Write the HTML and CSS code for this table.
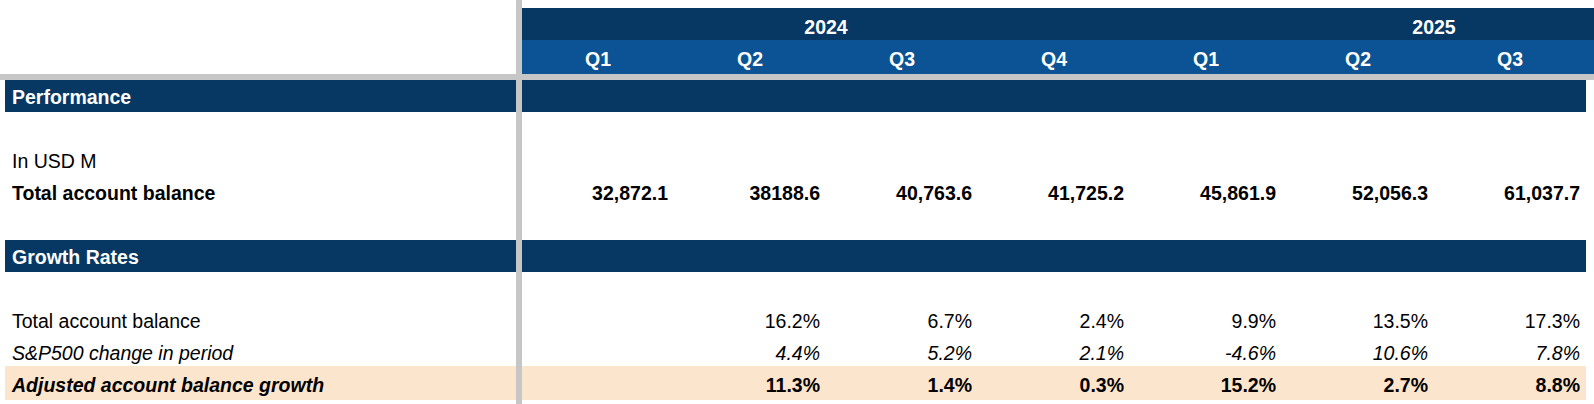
FILE: index.html
```html
<!DOCTYPE html>
<html lang="en">
<head>
<meta charset="utf-8">
<title>Account balance</title>
<link rel="stylesheet" href="styles.css">
</head>
<body>
<div class="sheet">
  <div class="lhead"></div>
  <div class="vbar"></div>
  <div class="rhead">
    <div class="years">
      <div class="year">2024</div>
      <div class="year">2025</div>
    </div>
    <div class="quarters">
      <div class="q">Q1</div><div class="q">Q2</div><div class="q">Q3</div><div class="q">Q4</div>
      <div class="q">Q1</div><div class="q">Q2</div><div class="q">Q3</div><div class="q"></div>
    </div>
  </div>
  <div class="hbar"></div>

  <div class="lbody">
    <div class="lrow band">Performance</div>
    <div class="lrow"></div>
    <div class="lrow">In USD M</div>
    <div class="lrow bold">Total account balance</div>
    <div class="lrow"></div>
    <div class="lrow band">Growth Rates</div>
    <div class="lrow"></div>
    <div class="lrow">Total account balance</div>
    <div class="lrow italic short">S&amp;P500 change in period</div>
    <div class="lrow hl bold italic tall">Adjusted account balance growth</div>
  </div>

  <div class="rbody">
    <div class="rrow band"><div></div><div></div><div></div><div></div><div></div><div></div><div></div></div>
    <div class="rrow"></div>
    <div class="rrow"></div>
    <div class="rrow bold"><div>32,872.1</div><div>38188.6</div><div>40,763.6</div><div>41,725.2</div><div>45,861.9</div><div>52,056.3</div><div>61,037.7</div></div>
    <div class="rrow"></div>
    <div class="rrow band"><div></div><div></div><div></div><div></div><div></div><div></div><div></div></div>
    <div class="rrow"></div>
    <div class="rrow"><div></div><div>16.2%</div><div>6.7%</div><div>2.4%</div><div>9.9%</div><div>13.5%</div><div>17.3%</div></div>
    <div class="rrow italic short"><div></div><div>4.4%</div><div>5.2%</div><div>2.1%</div><div>-4.6%</div><div>10.6%</div><div>7.8%</div></div>
    <div class="rrow hl bold tall"><div></div><div>11.3%</div><div>1.4%</div><div>0.3%</div><div>15.2%</div><div>2.7%</div><div>8.8%</div></div>
  </div>
</div>
</body>
</html>
```

FILE: styles.css
```css
* { box-sizing: border-box; }

html, body {
  margin: 0;
  padding: 0;
  background: #ffffff;
}

body {
  width: 1594px;
  height: 404px;
  overflow: hidden;
  font-family: "Liberation Sans", Arial, sans-serif;
  font-size: 19.5px;
  color: #000000;
}

.sheet {
  display: grid;
  grid-template-columns: 516px 6px 1072px;
  grid-template-rows: 74px 6px 324px;
  width: 1594px;
  height: 404px;
}

.lhead { grid-row: 1; grid-column: 1; background: #ffffff; }

.vbar {
  grid-row: 1 / 4;
  grid-column: 2;
  background: #c6c6c6;
}

.hbar {
  grid-row: 2;
  grid-column: 1 / 4;
  background: #c6c6c6;
}

.rhead {
  grid-row: 1;
  grid-column: 3;
  padding-top: 8px;
  overflow: hidden;
  color: #ffffff;
  font-weight: bold;
}

.years {
  display: flex;
  height: 32px;
  background: #073763;
}

.year {
  flex: 0 0 608px;
  display: flex;
  align-items: flex-end;
  justify-content: center;
  padding-bottom: 1px;
}

.quarters {
  display: flex;
  height: 34px;
  background: #0b5394;
}

.q {
  flex: 0 0 152px;
  display: flex;
  align-items: flex-end;
  justify-content: center;
  padding-bottom: 3px;
}

.lbody { grid-row: 3; grid-column: 1; }
.rbody { grid-row: 3; grid-column: 3; overflow: hidden; }

.lrow {
  height: 32px;
  margin-left: 5px;
  padding-left: 7px;
  padding-bottom: 3px;
  display: flex;
  align-items: flex-end;
  white-space: nowrap;
}

.rrow {
  height: 32px;
  width: 1064px;
  display: grid;
  grid-template-columns: repeat(7, 152px);
}

.rrow > div {
  display: flex;
  align-items: flex-end;
  justify-content: flex-end;
  padding-right: 6px;
  padding-bottom: 3px;
  white-space: nowrap;
}

.short { height: 30px; }
.lrow.short, .rrow.short > div { padding-bottom: 1px; }
.tall { height: 34px; }
.lrow.tall, .rrow.tall > div { padding-bottom: 3px; }

.band {
  background: #073763;
  color: #ffffff;
  font-weight: bold;
}

.hl { background: #fce5cd; }
.bold { font-weight: bold; }
.italic { font-style: italic; }
```
